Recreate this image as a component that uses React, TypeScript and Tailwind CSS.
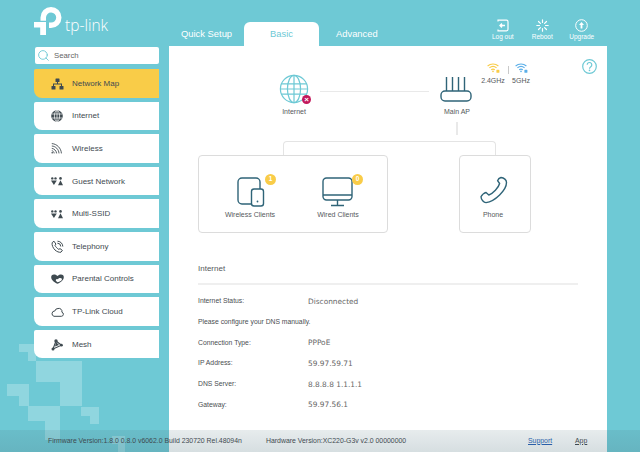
import React from "react";
import { Search } from "lucide-react";

const dark = "#3f4a50";
const teal = "#2f6478";

const NetworkMapIcon = () => (
  <svg width="13" height="12" viewBox="0 0 13 12" fill={dark}>
    <rect x="4.5" y="0.5" width="4" height="3.5" rx="0.5" />
    <rect x="0.5" y="8" width="4" height="3.5" rx="0.5" />
    <rect x="8.5" y="8" width="4" height="3.5" rx="0.5" />
    <path d="M6 4h1v1.6h4V8h-1V6.6H3V8H2V5.6h4z" />
  </svg>
);

const InternetIcon = () => (
  <svg width="12" height="12" viewBox="0 0 12 12">
    <circle cx="6" cy="6" r="5.8" fill={dark} />
    <g fill="none" stroke="#fff" strokeWidth="0.7">
      <ellipse cx="6" cy="6" rx="2.6" ry="5.4" />
      <path d="M6 .5v11M.7 4h10.6M.7 8h10.6" />
    </g>
  </svg>
);

const WirelessIcon = () => (
  <svg width="11" height="11" viewBox="0 0 11 11" fill="none" stroke={dark} strokeWidth="0.9">
    <path d="M.8.6c5 .2 9.4 4.6 9.6 9.8M.8 3c3.8.2 7 3.4 7.2 7.4M.8 5.4c2.4.2 4.6 2.4 4.8 5M.8 7.7c1.2.1 2.2 1.3 2.4 2.7" />
    <circle cx="1.2" cy="9.8" r="0.8" fill={dark} stroke="none" />
  </svg>
);

const GuestIcon = () => (
  <svg width="12" height="9" viewBox="0 0 12 9" fill={dark}>
    <circle cx="1.3" cy="1.4" r="1.2" />
    <circle cx="4.500" cy="1.4" r="1.2" />
    <path d="M0 3.400h5.800L2.900 8z" />
    <circle cx="9.500" cy="1.400" r="1.300" />
    <path d="M7 8.300l2.500-5 2.500 5z" />
  </svg>
);

const TelephonyIcon = () => (
  <svg width="13" height="13" viewBox="0 0 13 13" fill="none" stroke={dark} strokeWidth="1">
    <path d="M3 1.200 1.200 2.600c-.6 2.400.8 5.400 2.800 7.400 1.800 1.600 4 2.600 6 2.200l1.400-1.800-2.400-1.800-1.200.8C6.400 8.600 4.600 6.800 4 5.400l.9-1.300z" />
    <path d="M6.500 1.200a5.400 5.400 0 0 1 5.300 5.300M6.400 3.200a3.400 3.400 0 0 1 3.400 3.300" />
  </svg>
);

const ParentalIcon = () => (
  <svg width="13" height="10" viewBox="0 0 13 10">
    <path d="M6.500 9.800C3 8 .2 6 .2 3.200A2.800 2.800 0 0 1 3 .4c1.500 0 2.700.6 3.500 1.600C7.300 1 8.500.4 10 .4a2.800 2.800 0 0 1 2.800 2.800c0 2.800-2.800 4.800-6.300 6.600z" fill={dark} />
    <path d="M6.600 8.200C5 7.200 4.400 6.500 5 5.600c.6-.8 1.500-.6 1.900-.2.800-1.800 3.200-1.800 4-.6.500 1.600-2 3-4.300 3.400z" fill="#fff" />
  </svg>
);

const CloudIcon = () => (
  <svg width="13" height="10" viewBox="0 0 13 10" fill="none" stroke={dark} strokeWidth="1">
    <path d="M3 9.300h7.400a2.100 2.100 0 0 0 .5-4.100A3.100 3.100 0 0 0 7 1.500 3.300 3.300 0 0 0 3.800 4 2.700 2.700 0 0 0 3 9.300z" />
  </svg>
);

const MeshIcon = () => (
  <svg width="12" height="12" viewBox="0 0 12 12" fill={dark}>
    <path d="M5 2 10.500 6.200 2 10z" fill="none" stroke={dark} strokeWidth="1.100" />
    <path d="M5 3 8 6 4 7.500z" />
    <circle cx="5" cy="2" r="1.700" />
    <circle cx="10.400" cy="6.200" r="1.400" />
    <circle cx="2" cy="10" r="1.500" />
  </svg>
);

const menu = [
  { label: "Network Map", icon: <NetworkMapIcon />, active: true },
  { label: "Internet", icon: <InternetIcon /> },
  { label: "Wireless", icon: <WirelessIcon /> },
  { label: "Guest Network", icon: <GuestIcon /> },
  { label: "Multi-SSID", icon: <GuestIcon /> },
  { label: "Telephony", icon: <TelephonyIcon /> },
  { label: "Parental Controls", icon: <ParentalIcon /> },
  { label: "TP-Link Cloud", icon: <CloudIcon /> },
  { label: "Mesh", icon: <MeshIcon /> },
];

const Logo = () => (
  <div className="flex items-start gap-[2px]">
    <svg width="29" height="29" viewBox="0 0 29 29" fill="#fff">
      <path d="M6.500 10.500A10.500 10.500 0 1 1 17 21h-2v-5.400h2a5.100 5.100 0 1 0-5-5.100v3.300H6.500z" />
      <path d="M0 15h12v13H6.200v-7.500H0z" />
    </svg>
    <span className="mt-[7px] font-['Open_Sans',sans-serif] text-[15.500px] leading-[22px] font-light text-white">tp-link</span>
  </div>
);

const LogOutIcon = () => (
  <svg width="12" height="13" viewBox="0 0 12 13" fill="none" stroke="#fff" strokeWidth="1.200">
    <path d="M1 2.500V1.200h8.500a1.500 1.500 0 0 1 1.500 1.500v7.600a1.500 1.500 0 0 1-1.500 1.500H1v-1.300" />
    <path d="M8 6.500H3.200M5 4.600 3.100 6.500 5 8.400" strokeWidth="1.500" />
  </svg>
);

const RebootIcon = () => (
  <svg width="13" height="13" viewBox="0 0 13 13" fill="none" stroke="#fff" strokeWidth="1.200" strokeLinecap="round">
    <path d="M6.500.8v2.700M10.500 2.500 8.600 4.400M12.200 6.500H9.500M10.500 10.500 8.600 8.600M6.500 12.200V9.500M2.500 10.500l1.900-1.900M.8 6.500h2.700M2.500 2.500l1.900 1.900" />
  </svg>
);

const UpgradeIcon = () => (
  <svg width="13" height="13" viewBox="0 0 13 13" fill="none" stroke="#fff" strokeWidth="1">
    <circle cx="6.500" cy="6.500" r="5.800" />
    <path d="M6.500 3 4 6h1.600v3.400h1.800V6H9z" fill="#fff" stroke="none" />
  </svg>
);

const HeaderAction = ({ icon, label }: { icon: React.ReactNode; label: string }) => (
  <div className="flex w-[39.500px] flex-col items-center">
    <div className="flex h-[14px] items-center">{icon}</div>
    <span className="text-[6.500px] leading-[9px] text-white">{label}</span>
  </div>
);

const Wifi = ({ color }: { color: string }) => (
  <svg width="13" height="10" viewBox="0 0 13 10" fill="none" stroke={color} strokeWidth="1.100">
    <path d="M.6 3A8.200 8.200 0 0 1 11.400 3M2.400 4.900a5.600 5.600 0 0 1 7.200 0M4.200 6.800a3 3 0 0 1 3.600 0" />
    <circle cx="6" cy="8.400" r="0.800" fill={color} stroke="none" />
    <rect x="9.400" y="6.800" width="3" height="3" rx="0.600" fill={color} stroke="none" />
  </svg>
);

const Badge = ({ value, className }: { value: string; className: string }) => (
  <span className={`absolute flex h-[11px] w-[11px] items-center justify-center rounded-full bg-[#f9cc48] text-[6.500px] leading-none font-bold text-white ${className}`}>
    {value}
  </span>
);

const NodeLabel = ({ children, className }: { children: React.ReactNode; className: string }) => (
  <span className={`absolute w-[90px] -translate-x-1/2 text-center text-[7px] leading-[9px] text-[#55595c] ${className}`}>
    {children}
  </span>
);

const Diagram = () => (
  <div className="relative h-[218px]">
    <svg className="absolute top-[28px] left-[110px]" width="30" height="30" viewBox="0 0 32 32" fill="none" stroke="#6ec9d5" strokeWidth="1.300">
      <circle cx="16" cy="16" r="14.500" />
      <ellipse cx="16" cy="16" rx="7" ry="14.500" />
      <path d="M16 1.500v29M2.500 10.500h27M2.500 21.500h27M1.500 16h29" />
    </svg>
    <span className="absolute top-[49px] left-[133px] flex h-[9px] w-[9px] items-center justify-center rounded-full bg-[#c2185b] text-[8px] leading-none font-bold text-white">×</span>
    <NodeLabel className="top-[61px] left-[125px]">Internet</NodeLabel>

    <div className="absolute top-[45px] left-[151px] h-[1px] w-[109px] bg-[#e9e9e9]" />

    <svg className="absolute top-[30px] left-[271px]" width="32" height="26" viewBox="0 0 32 26" fill="none" stroke={teal} strokeWidth="1.400">
      <path d="M6.500 1v14M12.500 1v14M18.500 1v14M24.500 1v14" />
      <rect x="1" y="15" width="30" height="10" rx="4" />
    </svg>
    <NodeLabel className="top-[61px] left-[288px]">Main AP</NodeLabel>

    <div className="absolute top-[17px] left-[318px]"><Wifi color="#f9cc48" /></div>
    <div className="absolute top-[20px] left-[339px] h-[8px] w-[1px] bg-[#c9c9c9]" />
    <div className="absolute top-[17px] left-[346px]"><Wifi color="#5aaee8" /></div>
    <NodeLabel className="top-[30px] left-[324px]">2.4GHz</NodeLabel>
    <NodeLabel className="top-[30px] left-[352px]">5GHz</NodeLabel>

    <svg className="absolute top-[13px] left-[413px]" width="15" height="15" viewBox="0 0 15 15" fill="none" stroke="#6ec9d5" strokeWidth="1.200">
      <circle cx="7.500" cy="7.500" r="6.800" />
      <path d="M5.200 5.800a2.300 2.300 0 1 1 3.600 1.900c-.9.600-1.300 1-1.300 2" />
      <circle cx="7.500" cy="11.400" r="0.800" fill="#6ec9d5" stroke="none" />
    </svg>

    <div className="absolute top-[76px] left-[287px] h-[13px] w-[1.500px] bg-[#e9e9e9]" />
    <div className="absolute top-[95px] left-[114px] h-[16px] w-[213px] rounded-t-[4px] border-[1px] border-b-0 border-[#e4e4e4]" />

    <div className="absolute top-[109px] left-[29px] h-[78px] w-[190px] rounded-[4px] border-[1px] border-[#dcdcdc] bg-white">
      <svg className="absolute top-[21px] left-[38px]" width="28" height="30" viewBox="0 0 28 30" fill="none" stroke={teal} strokeWidth="1.400">
        <path d="M15 27H5a4 4 0 0 1-4-4V5a4 4 0 0 1 4-4h14a4 4 0 0 1 4 4v7" />
        <rect x="14.500" y="12" width="12" height="17" rx="2.500" fill="#fff" />
        <circle cx="20.500" cy="24.500" r="0.900" fill={teal} stroke="none" />
      </svg>
      <Badge value="1" className="top-[18px] left-[66px]" />
      <NodeLabel className="top-[54px] left-[51px]">Wireless Clients</NodeLabel>

      <svg className="absolute top-[21px] left-[123px]" width="32" height="30" viewBox="0 0 32 30" fill="none" stroke={teal} strokeWidth="1.400">
        <rect x="1" y="1" width="29" height="22" rx="3.500" />
        <path d="M1 18h29M15.500 23v5M9 28.500h13" />
      </svg>
      <Badge value="0" className="top-[18px] left-[153px]" />
      <NodeLabel className="top-[54px] left-[139px]">Wired Clients</NodeLabel>
    </div>

    <div className="absolute top-[109px] left-[290px] h-[78px] w-[72px] rounded-[4px] border-[1px] border-[#dcdcdc] bg-white">
      <svg className="absolute top-[20px] left-[20px]" width="28" height="28" viewBox="0 0 28 28" fill="none" stroke={teal} strokeWidth="1.400">
        <path d="M21 1.500c-1.300.4-3 2-3.400 3.200l2 2.800c-.9 4-6.700 10-10.800 11.500L6 16.500c-1.500.3-4.200 2.500-5 4.300.2 3 2.600 5.800 5 5.800C15 25.500 26.500 14 26.500 6.500c0-2.500-2.500-4.800-5.500-5z" />
      </svg>
      <NodeLabel className="top-[54px] left-[33px]">Phone</NodeLabel>
    </div>
  </div>
);

const rows = [
  { label: "Internet Status:", value: "Disconnected" },
  { label: "Please configure your DNS manually." },
  { label: "Connection Type:", value: "PPPoE" },
  { label: "IP Address:", value: "59.97.59.71" },
  { label: "DNS Server:", value: "8.8.8.8 1.1.1.1" },
  { label: "Gateway:", value: "59.97.56.1" },
];

const InfoPanel = () => (
  <div className="pr-[29px] pl-[29px]">
    <div className="border-b-[2px] border-[#efefef] pb-[9px] text-[8px] leading-[10px] text-[#55595c]">Internet</div>
    <div className="mt-[6px] flex flex-col">
      {rows.map((row) => (
        <div key={row.label} className="flex h-[20.700px] items-center text-[6.800px] text-[#4a4e51]">
          <span className="w-[110px] whitespace-nowrap">{row.label}</span>
          {row.value && (
            <span className="font-['DejaVu_Sans',sans-serif] text-[7.400px] whitespace-nowrap text-[#666]">{row.value}</span>
          )}
        </div>
      ))}
    </div>
  </div>
);

export default function App() {
  return (
    <div className="relative flex h-[452px] w-[640px] flex-col overflow-hidden bg-[#6ec9d5] font-['Liberation_Sans',sans-serif]">
      <svg className="absolute top-[340px] left-0" width="130" height="112" viewBox="0 340 130 112" fill="#fff" fillOpacity="0.24">
        <path d="M19 344h17v17h-8v-9h-9zM36 361h46v45H60v-24H36zM7 384h22v22H19v-10H7zM28 406h32v34H45v-19H28zM81 407h18v17h-9v-8h-9zM112 436h13v16h-7v-8h-6z" />
      </svg>

      <header className="relative flex h-[46px] shrink-0">
        <div className="w-[169px] pt-[7px] pl-[34px]">
          <Logo />
        </div>
        <nav className="flex items-end">
          <span className="w-[75px] pl-[12px] pb-[6px] text-[9.400px] leading-[12px] whitespace-nowrap text-white">Quick Setup</span>
          <span className="h-[24px] w-[75px] rounded-t-[6px] bg-white pt-[6px] text-center text-[9.400px] leading-[12px] text-[#6ec9d5]">Basic</span>
          <span className="pb-[6px] pl-[17px] text-[9.400px] leading-[12px] text-white">Advanced</span>
        </nav>
        <div className="absolute top-[18px] left-[483px] flex">
          <HeaderAction icon={<LogOutIcon />} label="Log out" />
          <HeaderAction icon={<RebootIcon />} label="Reboot" />
          <HeaderAction icon={<UpgradeIcon />} label="Upgrade" />
        </div>
      </header>

      <div className="relative flex min-h-0 flex-1">
        <aside className="w-[169px] shrink-0 pt-[1px] pr-[10px] pl-[34px]">
          <div className="ml-[1px] flex h-[17px] items-center gap-[3px] rounded-[2px] bg-white pl-[2px] text-[7.800px] text-[#666]">
            <Search size={13} strokeWidth={1.700} color="#6ec9d5" />
            <span className="ml-[1px]">Search</span>
          </div>
          <ul className="mt-[5px] flex flex-col gap-[4px]">
            {menu.map((item) => (
              <li
                key={item.label}
                className={`flex h-[28.600px] items-center rounded-tl-[2px] rounded-bl-[8px] pt-[1px] pl-[17px] text-[8px] text-[#414a50] ${item.active ? "bg-[#f9cc48]" : "bg-white"}`}
              >
                <span className="flex w-[21px] justify-start">{item.icon}</span>
                {item.label}
              </li>
            ))}
          </ul>
        </aside>
        <main className="w-[438px] shrink-0 bg-white">
          <Diagram />
          <InfoPanel />
        </main>
      </div>

      <footer className="absolute right-0 bottom-0 left-0 flex h-[22px] items-center bg-gradient-to-b from-[#4b6f7a22] to-[#4b6f7a3a] pl-[48px] text-[6.900px] text-[#3f4a50]">
        <span className="w-[218px] whitespace-nowrap">Firmware Version:1.8.0 0.8.0 v6062.0 Build 230720 Rel.48094n</span>
        <span className="w-[262px] whitespace-nowrap">Hardware Version:XC220-G3v v2.0 00000000</span>
        <a className="w-[47px] text-[#2a5fa8] underline">Support</a>
        <a className="text-[#3f4a50] underline">App</a>
      </footer>
    </div>
  );
}
